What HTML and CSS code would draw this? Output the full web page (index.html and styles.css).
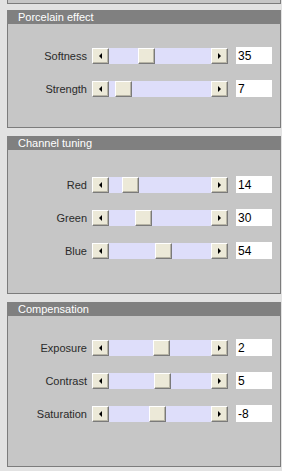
FILE: index.html
```html
<!DOCTYPE html>
<html lang="en">
<head>
  <meta charset="UTF-8" />
  <title>Porcelain</title>
  <link rel="stylesheet" href="styles.css">
</head>
<body>
  <div class="panel panel-tail"></div>

  <section class="panel">
    <h2 class="panel-title">Porcelain effect</h2>
    <div class="rows rows-porcelain">
      <div class="row">
        <label>Softness</label>
        <div class="scroll"><span class="btn btn-left"></span><span class="track"><span class="thumb" style="left: 29px"></span></span><span class="btn btn-right"></span></div>
        <input type="text" value="35" />
      </div>
      <div class="row">
        <label>Strength</label>
        <div class="scroll"><span class="btn btn-left"></span><span class="track"><span class="thumb" style="left: 6px"></span></span><span class="btn btn-right"></span></div>
        <input type="text" value="7" />
      </div>
    </div>
  </section>

  <section class="panel">
    <h2 class="panel-title">Channel tuning</h2>
    <div class="rows rows-channel">
      <div class="row">
        <label>Red</label>
        <div class="scroll"><span class="btn btn-left"></span><span class="track"><span class="thumb" style="left: 13px"></span></span><span class="btn btn-right"></span></div>
        <input type="text" value="14" />
      </div>
      <div class="row">
        <label>Green</label>
        <div class="scroll"><span class="btn btn-left"></span><span class="track"><span class="thumb" style="left: 26px"></span></span><span class="btn btn-right"></span></div>
        <input type="text" value="30" />
      </div>
      <div class="row">
        <label>Blue</label>
        <div class="scroll"><span class="btn btn-left"></span><span class="track"><span class="thumb" style="left: 46px"></span></span><span class="btn btn-right"></span></div>
        <input type="text" value="54" />
      </div>
    </div>
  </section>

  <section class="panel">
    <h2 class="panel-title">Compensation</h2>
    <div class="rows rows-comp">
      <div class="row">
        <label>Exposure</label>
        <div class="scroll"><span class="btn btn-left"></span><span class="track"><span class="thumb" style="left: 44px"></span></span><span class="btn btn-right"></span></div>
        <input type="text" value="2" />
      </div>
      <div class="row">
        <label>Contrast</label>
        <div class="scroll"><span class="btn btn-left"></span><span class="track"><span class="thumb" style="left: 45px"></span></span><span class="btn btn-right"></span></div>
        <input type="text" value="5" />
      </div>
      <div class="row">
        <label>Saturation</label>
        <div class="scroll"><span class="btn btn-left"></span><span class="track"><span class="thumb" style="left: 40px"></span></span><span class="btn btn-right"></span></div>
        <input type="text" value="-8" />
      </div>
    </div>
  </section>
</body>
</html>
```

FILE: styles.css
```css
body {
  font-family: "Liberation Sans", Arial, sans-serif;
  background-color: #e2e2e2;
  margin: 0;
  padding: 0 1px 0 7px;
}
.panel {
  background-color: #c6c6c6;
  border: 1px solid #7c7c7c;
  border-top: none;
  margin-top: 8px;
}
.panel-tail {
  height: 3px;
  margin-top: 0;
  margin-bottom: -2px;
}
.panel-title {
  margin: 0 -1px;
  height: 14px;
  line-height: 14px;
  background-color: #808080;
  color: #fff;
  font-size: 11px;
  font-weight: normal;
  padding-left: 11px;
}
.rows-porcelain {
  padding: 15px 0 22px;
}
.rows-channel {
  padding: 18px 0 26px;
}
.rows-comp {
  padding: 15px 0 36px;
}
.row {
  display: flex;
  align-items: center;
  height: 33px;
}
label {
  width: 79px;
  text-align: right;
  font-size: 11px;
  color: #2a2a2a;
  margin-right: 5px;
}
.scroll {
  display: flex;
  width: 136px;
  height: 16px;
}
.btn, .thumb {
  box-sizing: border-box;
  height: 16px;
  background-color: #ece9d8;
  border: 1px solid;
  border-color: #fff #7a7a7a #7a7a7a #fff;
  box-shadow: inset -1px -1px 0 #b8b5a6;
}
.btn {
  width: 17px;
  display: flex;
  align-items: center;
  justify-content: center;
}
.btn::before {
  content: "";
  border-top: 3px solid transparent;
  border-bottom: 3px solid transparent;
}
.btn-left::before {
  border-right: 3px solid #000;
}
.btn-right::before {
  border-left: 3px solid #000;
}
.track {
  position: relative;
  flex: 1;
  background-color: #dedefa;
}
.thumb {
  position: absolute;
  top: 0;
  width: 17px;
}
input {
  box-sizing: border-box;
  width: 36px;
  height: 17px;
  margin-left: 8px;
  border: none;
  padding: 0 2px;
  font-family: "Liberation Sans", Arial, sans-serif;
  font-size: 12px;
  color: #000;
  background: #fff;
}
```
